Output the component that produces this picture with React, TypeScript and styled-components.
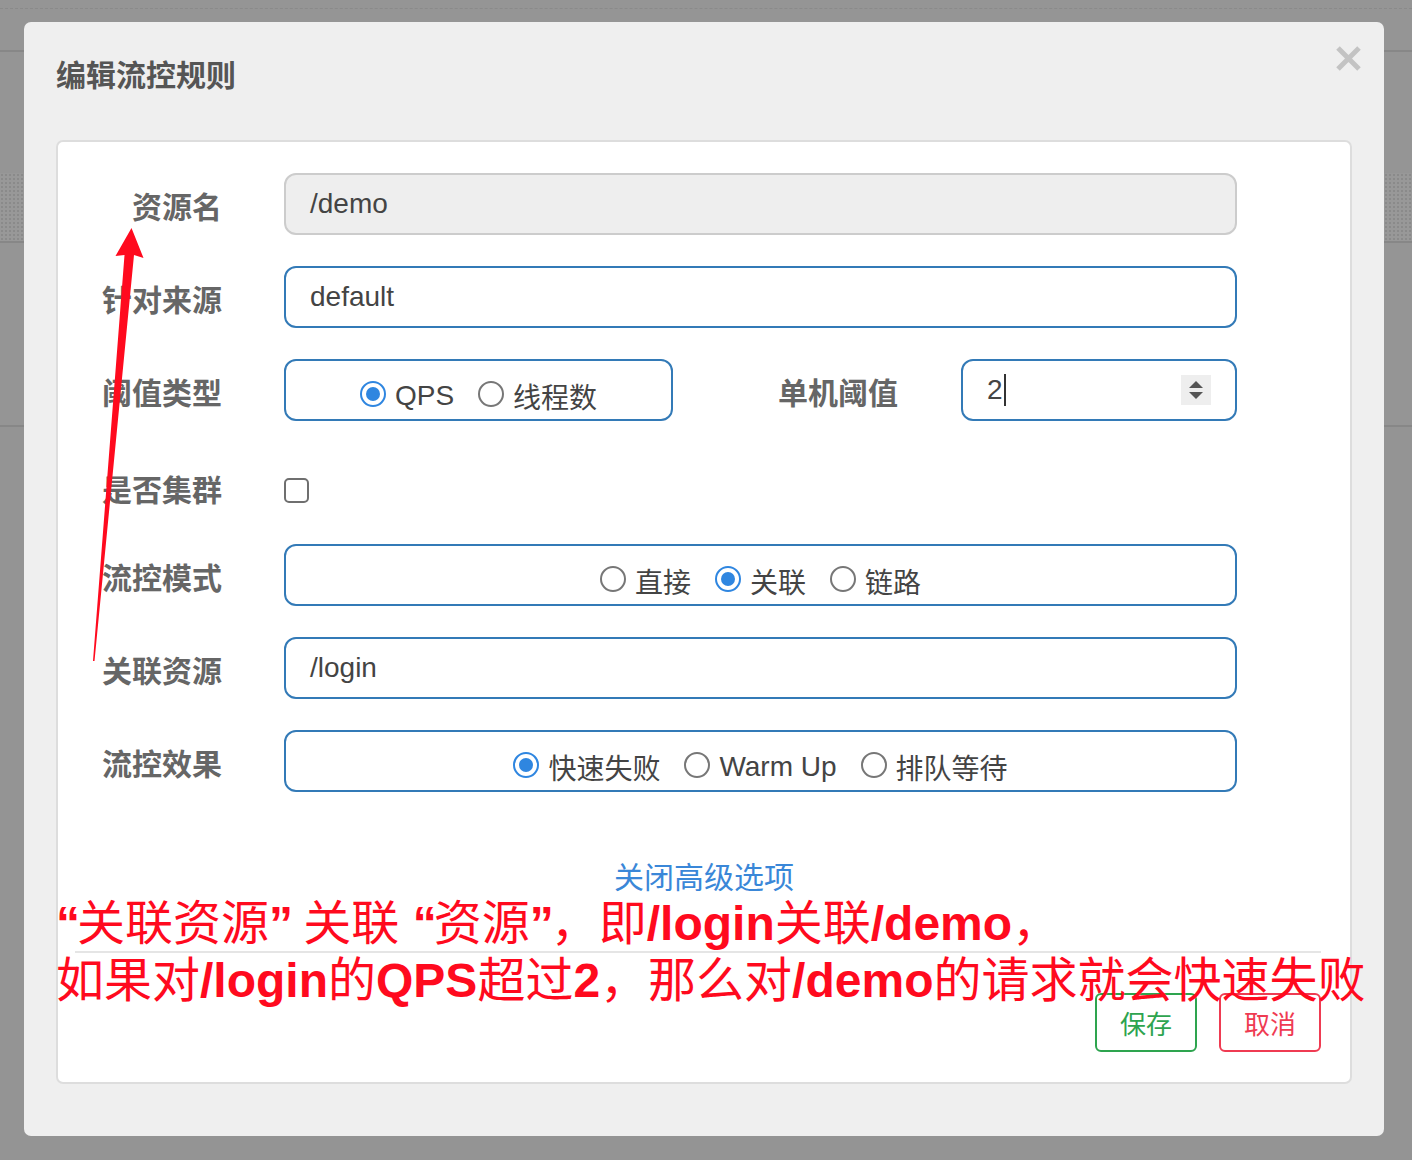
import React from "react";
import styled, { createGlobalStyle } from "styled-components";

const GlobalStyle = createGlobalStyle`
  body {
    margin: 0;
    font-family: "Liberation Sans", "Noto Sans CJK SC", sans-serif;
  }
`;

const FONT = `"Liberation Sans", "Noto Sans CJK SC", sans-serif`;

function App() {
  return (
    <Screen>
      <GlobalStyle />
      <Backdrop>
        <BgBlock $h={8} $dashed />
        <BgBlock $h={41} $line />
        <BgBlock $h={121} />
        <BgBlock $h={68} $dotted $line />
        <BgBlock $h={182} $line />
      </Backdrop>

      <Modal>
        <Header>
          <Title>编辑流控规则</Title>
          <Close aria-label="close">
            <svg width="27" height="27" viewBox="0 0 27 27">
              <path d="M3 3 L24 24 M24 3 L3 24" stroke="#c3c3c3" strokeWidth="5" />
            </svg>
          </Close>
        </Header>

        <Panel>
          <Form>
            <Row>
              <Label>资源名</Label>
              <Field $disabled>/demo</Field>
            </Row>
            <Row>
              <Label>针对来源</Label>
              <Field>default</Field>
            </Row>
            <Row>
              <Label>阈值类型</Label>
              <SplitRow>
                <Field $center>
                  <RadioGroup>
                    <Radio checked label="QPS" />
                    <Radio label="线程数" />
                  </RadioGroup>
                </Field>
                <Label>单机阈值</Label>
                <Field>
                  2
                  <Caret />
                  <Spinner>
                    <svg width="16" height="26" viewBox="0 0 16 26">
                      <path d="M8 4 L15 11 L1 11 Z" fill="#555" />
                      <path d="M1 15 L15 15 L8 22 Z" fill="#555" />
                    </svg>
                  </Spinner>
                </Field>
              </SplitRow>
            </Row>
            <Row $h={61}>
              <Label $offset={8}>是否集群</Label>
              <Checkbox />
            </Row>
            <Row>
              <Label>流控模式</Label>
              <Field $center>
                <RadioGroup>
                  <Radio label="直接" />
                  <Radio checked label="关联" />
                  <Radio label="链路" />
                </RadioGroup>
              </Field>
            </Row>
            <Row>
              <Label>关联资源</Label>
              <Field>/login</Field>
            </Row>
            <Row>
              <Label>流控效果</Label>
              <Field $center>
                <RadioGroup>
                  <Radio checked label="快速失败" />
                  <Radio label="Warm Up" />
                  <Radio label="排队等待" />
                </RadioGroup>
              </Field>
            </Row>
          </Form>

          <Toggle>关闭高级选项</Toggle>

          <Footer>
            <Button $tone="#2ea44f">保存</Button>
            <Button $tone="#ef3b52">取消</Button>
          </Footer>
        </Panel>
      </Modal>

      <Note>
        <Quote>“</Quote>关联资源<Quote>”</Quote> 关联 <Quote>“</Quote>资源<Quote>”</Quote>，即<b>/login</b>关联<b>/demo</b>，
        <br />
        如果对<b>/login</b>的<b>QPS</b>超过<b>2</b>，那么对<b>/demo</b>的请求就会快速失败
      </Note>

      <Arrow width="160" height="680" viewBox="0 0 160 680">
        <polygon
          points="131.5,228 143.5,258 134,255 94.5,661 93,661 124.5,255 115.5,256"
          fill="#ff0a1e"
        />
      </Arrow>
    </Screen>
  );
}

function Radio({ checked, label }: { checked?: boolean; label: string }) {
  return (
    <RadioItem>
      <RadioDot $checked={!!checked} />
      <span>{label}</span>
    </RadioItem>
  );
}

export default App;

const Screen = styled.div`
  position: relative;
  width: 1412px;
  height: 1160px;
  overflow: hidden;
  background: #949494;
`;

const Backdrop = styled.div`
  display: flex;
  flex-direction: column;
`;

const BgBlock = styled.div<{ $h: number; $line?: boolean; $dashed?: boolean; $dotted?: boolean }>`
  height: ${(p) => p.$h}px;
  background-color: ${(p) => (p.$dotted ? "#989898" : "#959595")};
  background-image: ${(p) =>
    p.$dotted ? "radial-gradient(#8a8a8a 0.8px, transparent 1px)" : "none"};
  background-size: 4px 4px;
  border-bottom: ${(p) =>
    p.$dashed ? "1px dashed #8a8a8a" : p.$line ? "2px solid #878787" : "none"};
`;

const Modal = styled.div`
  position: absolute;
  left: 24px;
  top: 22px;
  width: 1360px;
  height: 1114px;
  background: #efefef;
  border-radius: 7px;
  display: flex;
  flex-direction: column;
`;

const Header = styled.div`
  position: relative;
  padding: 36px 32px 0;
  height: 82px;
  box-sizing: border-box;
`;

const Title = styled.h2`
  margin: 0;
  font-family: ${FONT};
  font-size: 30px;
  line-height: 36px;
  font-weight: bold;
  color: #555;
`;

const Close = styled.span`
  position: absolute;
  right: 22px;
  top: 23px;
  display: flex;
`;

const Panel = styled.div`
  margin: 36px 32px 0;
  height: 944px;
  box-sizing: border-box;
  background: #fff;
  border: 2px solid #dddddd;
  border-radius: 7px;
  display: flex;
  flex-direction: column;
`;

const Form = styled.div`
  padding: 31px 113px 0 0;
  display: flex;
  flex-direction: column;
  gap: 31px;
`;

const Row = styled.div<{ $h?: number }>`
  display: grid;
  grid-template-columns: 164px 1fr;
  column-gap: 62px;
  height: ${(p) => p.$h ?? 62}px;
  align-items: stretch;
`;

const SplitRow = styled.div`
  display: grid;
  grid-template-columns: 389px 1fr 276px;
  column-gap: 63px;
`;

const Label = styled.div<{ $offset?: number }>`
  text-align: right;
  font-family: ${FONT};
  font-size: 30px;
  font-weight: bold;
  line-height: 62px;
  padding-top: ${(p) => p.$offset ?? 4}px;
  color: #666;
`;

const Field = styled.div<{ $disabled?: boolean; $center?: boolean }>`
  position: relative;
  box-sizing: border-box;
  height: 62px;
  display: flex;
  align-items: center;
  justify-content: ${(p) => (p.$center ? "center" : "flex-start")};
  padding: 0 24px;
  font-family: ${FONT};
  font-size: 28px;
  color: #444;
  background: ${(p) => (p.$disabled ? "#eeeeee" : "#fff")};
  border: 2px solid ${(p) => (p.$disabled ? "#cccccc" : "#337ab7")};
  border-radius: 12px;
`;

const Caret = styled.span`
  width: 2px;
  height: 32px;
  margin-left: 1px;
  background: #333;
`;

const Spinner = styled.span`
  position: absolute;
  right: 24px;
  top: 14px;
  width: 30px;
  height: 30px;
  background: #eeeeee;
  display: flex;
  align-items: center;
  justify-content: center;
`;

const RadioGroup = styled.div`
  display: flex;
  align-items: center;
  gap: 24px;
  padding-top: 11px;
`;

const RadioItem = styled.label`
  display: flex;
  align-items: center;
  gap: 9px;
  font-family: ${FONT};
  font-size: 28px;
  color: #444;
`;

const RadioDot = styled.span<{ $checked: boolean }>`
  position: relative;
  box-sizing: border-box;
  width: 26px;
  height: 26px;
  margin-top: -4px;
  border-radius: 50%;
  border: 2px solid ${(p) => (p.$checked ? "#2f86e0" : "#777")};
  background: #fff;

  &::after {
    content: "";
    display: ${(p) => (p.$checked ? "block" : "none")};
    position: absolute;
    left: 4px;
    top: 4px;
    width: 14px;
    height: 14px;
    border-radius: 50%;
    background: #2f86e0;
  }
`;

const Checkbox = styled.span`
  align-self: start;
  margin-top: 26px;
  box-sizing: border-box;
  width: 25px;
  height: 25px;
  border: 2px solid #6f6f6f;
  border-radius: 5px;
  background: #fff;
`;

const Toggle = styled.a`
  margin-top: 70px;
  align-self: center;
  font-family: ${FONT};
  font-size: 30px;
  line-height: 32px;
  color: #3a87d8;
  cursor: pointer;
`;

const Footer = styled.div`
  margin: 57px 29px 0 17px;
  padding-top: 40px;
  border-top: 2px solid #e5e5e5;
  display: flex;
  justify-content: flex-end;
  gap: 22px;
`;

const Button = styled.button<{ $tone: string }>`
  width: 102px;
  height: 59px;
  box-sizing: border-box;
  background: #fff;
  border: 2px solid ${(p) => p.$tone};
  border-radius: 6px;
  color: ${(p) => p.$tone};
  font-family: ${FONT};
  font-size: 26px;
  padding: 0;
`;

const Note = styled.div`
  position: absolute;
  left: 56px;
  top: 895px;
  font-family: ${FONT};
  font-size: 48px;
  line-height: 57px;
  color: #ff0a1e;
  white-space: nowrap;

  b {
    font-weight: bold;
  }
`;

const Quote = styled.b`
  letter-spacing: -3px;
`;

const Arrow = styled.svg`
  position: absolute;
  left: 0;
  top: 0;
`;
